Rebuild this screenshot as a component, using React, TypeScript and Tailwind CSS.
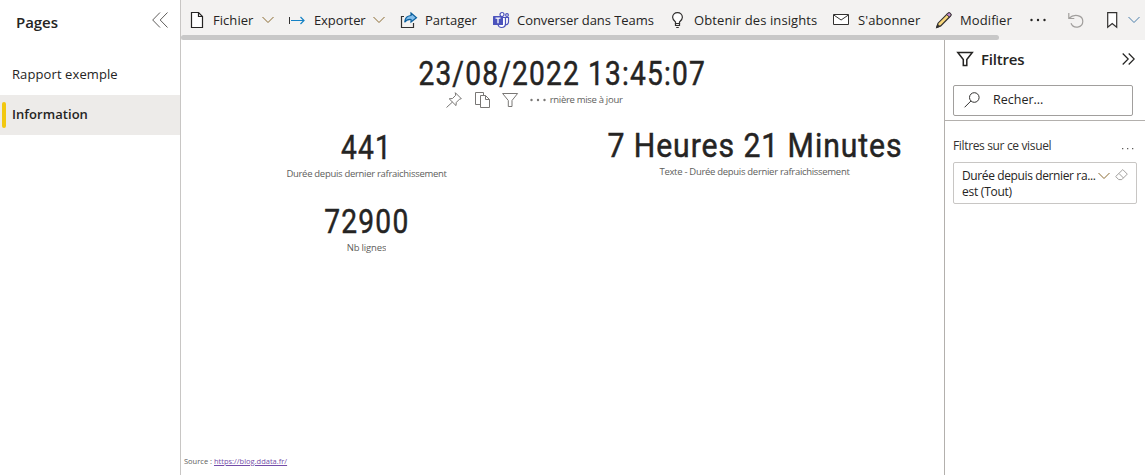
import type { ReactNode } from "react";

type IconProps = { className?: string; children?: ReactNode };

function Icon({ className = "", children }: IconProps) {
  return (
    <svg viewBox="0 0 16 16" fill="none" stroke="currentColor" className={`h-4 w-4 shrink-0 overflow-visible ${className}`}>
      {children}
    </svg>
  );
}

function Chevron({ className = "" }: { className?: string }) {
  return (
    <svg viewBox="0 0 12 8" fill="none" stroke="currentColor" className={`h-2 w-3 shrink-0 ${className}`}>
      <path d="M.5 1 6 6.500 11.500 1" strokeWidth="1" />
    </svg>
  );
}

const FileIcon = () => (
  <Icon className="text-[#252423]">
    <path d="M1.500.5h7l4 4v11h-11z" fill="#fff" strokeWidth="1.200" />
    <path d="M8.500.5v4h4" strokeWidth="1.200" />
  </Icon>
);

const ExportIcon = () => (
  <Icon>
    <path d="M.5 5v7" stroke="#323130" />
    <path d="M2 8.500h13M11.500 5l3.500 3.500-3.500 3.500" stroke="#1582c5" strokeWidth="1.200" />
  </Icon>
);

const ShareIcon = () => (
  <Icon>
    <path d="M3 4.500H.5v11h12V11" stroke="#323130" strokeWidth="1.200" />
    <path d="M10 1l5.500 4.700L10 10V7.500c-3-.2-5 .6-6.300 2.800C3.900 6.300 6 3.800 10 3.500z" fill="#83beec" stroke="#0b609e" strokeWidth="1.200" />
  </Icon>
);

const TeamsIcon = () => (
  <Icon className="text-[#4b53bc]">
    <circle cx="9" cy="2.500" r="2" fill="#fff" strokeWidth="1.200" />
    <circle cx="14" cy="3" r="1.400" strokeWidth="1.100" />
    <path d="M11 5.500h4.500V10a2.700 2.700 0 0 1-3 2.700M5 12.500c.4 2 1.700 3 3.500 3 2.400 0 4-1.500 4-4v-6H9" strokeWidth="1.200" fill="#fff" />
    <rect x="0" y="4" width="10" height="9" rx=".6" fill="currentColor" stroke="none" />
    <path d="M2.500 6.200h5M5 6.200v5" stroke="#fff" strokeWidth="1.300" />
  </Icon>
);

const BulbIcon = () => (
  <Icon className="text-[#323130]">
    <path d="M4.500 11.500V10C3 8.700 1.600 7.400 1.600 5.200A4.700 4.700 0 0 1 6.500.6a4.700 4.700 0 0 1 4.900 4.600c0 2.200-1.400 3.500-2.900 4.800v1.500z" fill="#fff" strokeWidth="1.200" />
    <path d="M4.500 11v2.500h4V11M5.200 15.500h2.600" strokeWidth="1.200" />
  </Icon>
);

const MailIcon = () => (
  <Icon className="text-[#323130]">
    <path d="M.5 2.500h15v10H.5z" fill="#fff" />
    <path d="m.8 3 7.300 5L15.400 3" />
  </Icon>
);

const PencilIcon = () => (
  <Icon className="text-[#323130]">
    <path d="M.7 15.400 2 11.200 11.800 1.400c1.700-1.700 4.300.9 2.700 2.600l-9.800 9.900z" fill="#f8d77c" strokeWidth="1.200" />
    <path d="m10.700 2.500 1.200-1.200c1.600-1.600 4.200 1 2.600 2.600l-1.200 1.200z" fill="#c58bce" />
    <path d="m.7 15.400 1-3 2 2z" fill="currentColor" />
  </Icon>
);

const FunnelIcon = ({ className = "" }: { className?: string }) => (
  <Icon className={className}>
    <path d="M.6 1.500h15L10 8.500v6H6.300v-6z" fill="#fff" />
  </Icon>
);

function Dots({ className = "" }: { className?: string }) {
  return (
    <svg viewBox="0 0 16 4" fill="currentColor" className={`h-1 w-4 shrink-0 ${className}`}>
      <circle cx="1.500" cy="2" r="1.200" />
      <circle cx="8" cy="2" r="1.200" />
      <circle cx="14.500" cy="2" r="1.200" />
    </svg>
  );
}

function Tool({ icon, label, className, textClass = "" }: { icon: ReactNode; label: string; className: string; textClass?: string }) {
  return (
    <button className={`flex shrink-0 items-center ${className}`}>
      {icon}
      <span className={`whitespace-nowrap text-[13px] leading-5 text-[#252423] ${textClass}`}>{label}</span>
    </button>
  );
}

function Card({ value, label, className, valueClass, labelClass = "" }: { value: string; label: ReactNode; className: string; valueClass: string; labelClass?: string }) {
  return (
    <div className={`flex shrink-0 flex-col items-center whitespace-nowrap ${className}`}>
      <div className={`font-[Roboto] text-[33.5px] leading-10 text-[#252423] [-webkit-text-stroke:0.5px_#252423] ${valueClass}`}>{value}</div>
      <div className={`text-[9.500px] leading-3 tracking-[-0.3px] text-[#605e5c] ${labelClass}`}>{label}</div>
    </div>
  );
}

function Pages() {
  return (
    <nav className="flex w-[181px] shrink-0 flex-col border-r border-[#c8c6c4] text-[13px] text-[#252423]">
      <div className="flex h-[55px] items-start justify-between pt-3 pr-3 pl-4">
        <h2 className="-mt-px text-[15px] leading-[22px] font-semibold tracking-[-0.05px]">Pages</h2>
        <Icon className="text-[#605e5c]">
          <path d="M8 .5.700 8 8 15.500M15.500.5 8.200 8l7.300 7.500" />
        </Icon>
      </div>
      <a className="flex h-10 items-center pl-3 tracking-[0.1px]">Rapport exemple</a>
      <a className="flex h-10 items-center bg-[#edebe9] pl-0.5 font-semibold tracking-[0.05px]">
        <span className="mr-1.5 h-[26px] w-1 rounded-sm bg-[#f2c811]" />
        Information
      </a>
    </nav>
  );
}

function Toolbar() {
  return (
    <header className="h-10 shrink-0 overflow-hidden bg-[#f3f2f1]">
      <div className="flex h-[35px] items-center pt-[5px] pl-[9px]">
        <Tool icon={<FileIcon />} label="Fichier" className="w-[72px] gap-[7px]" textClass="tracking-[0.05px]" />
        <Chevron className="mr-[15px] text-[#8a6a30]" />
        <Tool icon={<ExportIcon />} label="Exporter" className="w-[84px] gap-[9px]" textClass="tracking-[-0.1px]" />
        <Chevron className="mr-4 text-[#8a6a30]" />
        <Tool icon={<ShareIcon />} label="Partager" className="w-[92px] gap-2" />
        <Tool icon={<TeamsIcon />} label="Converser dans Teams" className="w-[178px] gap-2" textClass="tracking-[-0.05px]" />
        <Tool icon={<BulbIcon />} label="Obtenir des insights" className="w-[162px] gap-[7px]" textClass="tracking-[0.1px]" />
        <Tool icon={<MailIcon />} label="S'abonner" className="w-[103px] gap-[9px]" textClass="tracking-[0.1px]" />
        <Tool icon={<PencilIcon />} label="Modifier" className="w-[94px] gap-2" textClass="tracking-[0.1px]" />
        <Dots className="text-[#252423]" />
        <Icon className="mr-[23px] ml-[22px] text-[#a19f9d]">
          <path d="M.8 1v5.500h5.500M1 6.300C6 1.500 14.800 3 14.800 9.300c0 6.700-9.500 8-11.800 2" strokeWidth="1.200" />
        </Icon>
        <Icon className="text-[#323130]">
          <path d="M.7.6h9v14.700l-4.500-3.700-4.500 3.700z" fill="#fff" strokeWidth="1.200" />
        </Icon>
        <Chevron className="ml-[5px] text-[#4a7eaa]" />
      </div>
      <div className="h-[5px] w-[818px] rounded-full bg-[#c8c8c8]" />
    </header>
  );
}

function VisualActions() {
  return (
    <div className="absolute top-[-2px] left-0 flex items-center text-[#797775]">
      <Icon>
        <path d="m9.300.7 6 6-1.800.5-3.200 3.200-.3 3.200-6.800-6.800 3.300-.3 3.200-3.200zM6.500 10 .5 15.500" />
      </Icon>
      <Icon className="ml-[13px]">
        <path d="M5.500 12.500h-5V.5h8v3M5.500 3.500h5l4 4v8h-9zM10.500 3.500v4h4" />
      </Icon>
      <FunnelIcon className="ml-[11px]" />
      <Dots className="ml-3" />
    </div>
  );
}

function Report() {
  return (
    <main className="flex min-w-0 flex-1 flex-col pt-[14px]">
      <Card
        className="w-full"
        value="23/08/2022 13:45:07"
        valueClass="scale-x-[0.84] tracking-[1.400px]"
        label={<span className="relative mr-[57px] block w-[177px] text-right">rnière mise à jour<VisualActions /></span>}
      />
      <div className="flex pt-5">
        <Card className="mt-[1.500px] w-[371px]" value="441" valueClass="scale-x-[0.84] tracking-[1.500px]" label="Durée depuis dernier rafraichissement" />
        <Card className="w-[405px]" value="7 Heures 21 Minutes" valueClass="scale-x-[0.9] tracking-[1.050px]" label="Texte - Durée depuis dernier rafraichissement" />
      </div>
      <Card className="mt-[22px] w-[371px]" value="72900" valueClass="scale-x-[0.84] tracking-[1.500px]" label="Nb lignes" labelClass="h-[11px] overflow-hidden tracking-[-0.15px]" />
      <footer className="mt-auto pb-2 pl-[3px] text-[7.500px] leading-3 text-[#605e5c]">
        Source : <a className="text-[#744da9] underline">https://blog.ddata.fr/</a>
      </footer>
    </main>
  );
}

function Filters() {
  return (
    <aside className="flex w-[201px] shrink-0 flex-col border-l border-[#b3b0ad] bg-white text-[#252423]">
      <div className="flex h-[81px] flex-col border-b border-[#b3b0ad]">
        <div className="flex h-[45px] items-center pr-[10px] pb-[7px] pl-3">
          <Icon>
            <path d="M.8 1.500h14.500L9.800 8.500v6H6.300v-6z" strokeWidth="1.500" />
          </Icon>
          <h2 className="ml-2 flex-1 text-[15px] leading-5 font-semibold tracking-[-0.2px]">Filtres</h2>
          <svg viewBox="0 0 13 12" fill="none" stroke="currentColor" className="h-3 w-[13px]">
            <path d="m.7.5 5.500 5.500-5.500 5.500M6.700.5l5.500 5.500-5.500 5.500" strokeWidth="1.200" />
          </svg>
        </div>
        <div className="ml-2 flex h-[31px] w-[180px] items-center rounded-xs border border-[#a19f9d] pl-[10px]">
          <Icon className="-mt-0.5 text-[#323130]">
            <circle cx="10.300" cy="5.500" r="4.800" />
            <path d="M6.900 9 .6 15.300" />
          </Icon>
          <span className="ml-[13px] text-[12.500px]">Recher...</span>
        </div>
      </div>
      <div className="flex h-[41px] items-center justify-between pt-[9px] pr-[11px] pl-2 text-[12px] text-[#323130]">
        <span className="tracking-[-0.35px]">Filtres sur ce visuel</span>
        <svg viewBox="0 0 12 4" fill="#605e5c" className="mt-1 h-1 w-3">
          <path d="M0 2h1.300v1.300H0zM5 2h1.300v1.300H5zM10 2h1.300v1.300H10z" />
        </svg>
      </div>
      <div className="ml-2 flex h-[42px] w-[184px] rounded-xs border border-[#c8c6c4] pt-[5px] pl-2 text-[12px] leading-4">
        <div className="w-[136px] whitespace-nowrap">
          <div className="tracking-[-0.38px]">Durée depuis dernier ra...</div>
          <div className="tracking-[-0.25px]">est (Tout)</div>
        </div>
        <Chevron className="mt-1 text-[#8a6a30]" />
        <svg viewBox="0 0 13 12" fill="none" stroke="#a19f9d" className="mt-px ml-[5px] h-3 w-[13px]">
          <path d="M.7 7.500 7.800.6l4.500 4.500-5.500 5.500H3.700zM4 4.500l4.500 4.500" />
        </svg>
      </div>
    </aside>
  );
}

export default function App() {
  return (
    <div className="flex h-[475px] w-[1145px] overflow-hidden bg-white font-['Open_Sans','Noto_Sans',sans-serif]">
      <Pages />
      <div className="flex min-w-0 flex-1 flex-col">
        <Toolbar />
        <div className="flex min-h-0 flex-1">
          <Report />
          <Filters />
        </div>
      </div>
    </div>
  );
}
